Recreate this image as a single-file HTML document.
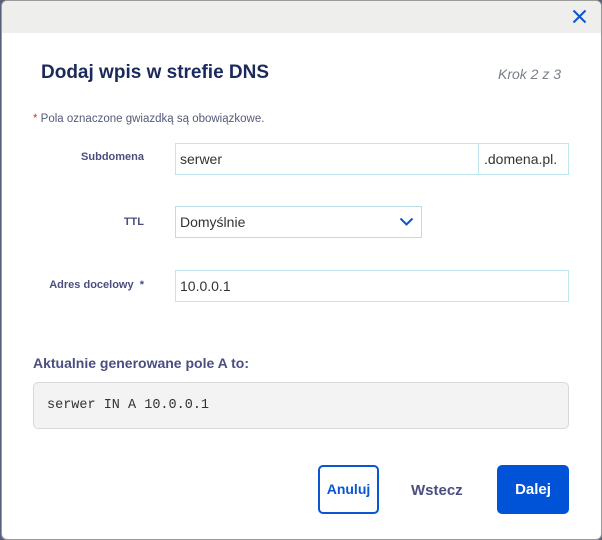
<!DOCTYPE html>
<html><head><meta charset="utf-8"><style>
*{box-sizing:border-box;margin:0;padding:0}
body{width:602px;height:540px;background:#5a5f7a;font-family:"Liberation Sans",sans-serif;position:relative;overflow:hidden}
.m{position:absolute;left:1px;top:0;width:601px;height:540px;background:#fff;border:1px solid #9a9a9a;border-radius:6px;overflow:hidden}
.hd{position:absolute;left:0;top:0;width:100%;height:32px;background:#eeefed}
.a{position:absolute;white-space:nowrap}
.lbl{font-size:11px;font-weight:bold;color:#4a4f80;text-align:right;width:120px}
.in{position:absolute;border:1px solid #bfe6ee;height:32px;font-size:14px;color:#333;padding:8px 4px;line-height:14px}
</style></head><body>
<div class="m">
<div class="hd"></div>
<svg class="a" style="left:570px;top:8px" width="15" height="15" viewBox="0 0 15 15"><path d="M1.5 1.5L13.5 13.5M13.5 1.5L1.5 13.5" stroke="#0a55d0" stroke-width="2"/></svg>
<div class="a" style="left:39px;top:61px;font-size:19px;font-weight:bold;color:#1b2a5c">Dodaj wpis w strefie DNS</div>
<div class="a" style="left:496px;top:65px;font-size:14px;font-style:italic;color:#7a7f88">Krok 2 z 3</div>
<div class="a" style="left:31px;top:112px;font-size:11.5px;color:#555a7a"><span style="color:#d33">*</span> Pola oznaczone gwiazdką są obowiązkowe.</div>
<div class="a lbl" style="left:22px;top:150px">Subdomena</div>
<div class="in" style="left:173px;top:142px;width:304px">serwer</div>
<div class="in" style="left:476px;top:142px;width:91px;padding-left:5px">.domena.pl.</div>
<div class="a lbl" style="left:22px;top:215px">TTL</div>
<div class="in" style="left:173px;top:205px;width:247px;border-color:#bcdce6">Domyślnie</div>
<svg class="a" style="left:397px;top:216px" width="15" height="10" viewBox="0 0 15 10"><path d="M1.5 1.5L7.5 7.5L13.5 1.5" stroke="#0a55d0" stroke-width="2" fill="none"/></svg>
<div class="a lbl" style="left:22px;top:278px">Adres docelowy&nbsp; *</div>
<div class="in" style="left:173px;top:269px;width:394px">10.0.0.1</div>
<div class="a" style="left:31px;top:354px;font-size:14px;font-weight:bold;color:#4a4f80">Aktualnie generowane pole A to:</div>
<div class="a" style="left:31px;top:381px;width:536px;height:47px;background:#f3f3f3;border:1px solid #d8d8d8;border-radius:5px;font-family:'Liberation Mono',monospace;font-size:13.5px;color:#333;padding:15px 13px">serwer IN A 10.0.0.1</div>
<div class="a" style="left:316px;top:464px;width:61px;height:49px;border:2px solid #0a55d0;border-radius:5px;font-size:14px;font-weight:bold;color:#0a55d0;text-align:center;line-height:45px">Anuluj</div>
<div class="a" style="left:409px;top:481px;font-size:15px;font-weight:bold;color:#4a4f80">Wstecz</div>
<div class="a" style="left:495px;top:464px;width:72px;height:49px;background:#0052d6;border-radius:5px;font-size:15px;font-weight:bold;color:#fff;text-align:center;line-height:49px">Dalej</div>
</div>
</body></html>
